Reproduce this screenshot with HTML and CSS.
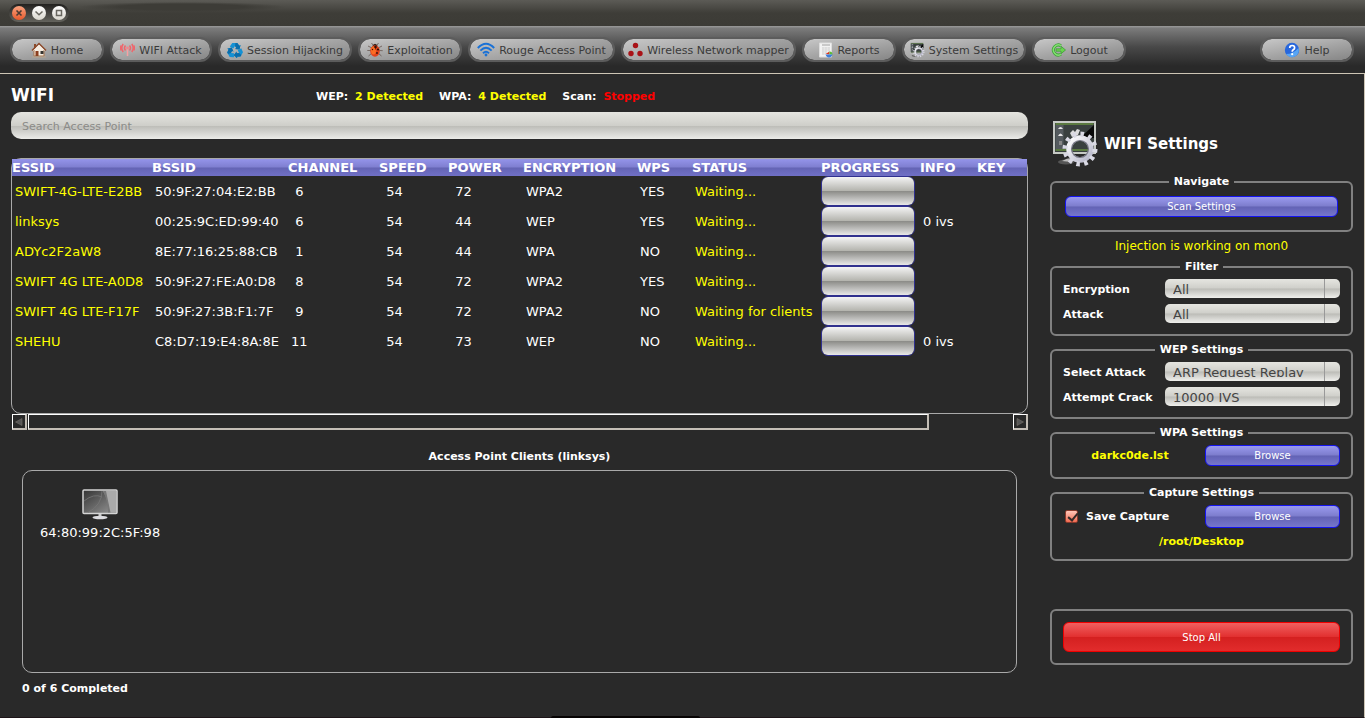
FILE: index.html
```html
<!DOCTYPE html>
<html lang="en">
<head>
<meta charset="utf-8">
<title>WIFI</title>
<link rel="stylesheet" href="styles.css">
</head>
<body>
<header class="titlebar">
  <div class="window-controls">
    <button class="wc wc-close" aria-label="Close"><svg viewBox="0 0 14 14"><path d="M4.5 4.5l5 5M9.5 4.5l-5 5" stroke="#4a3a32" stroke-width="1.6"/></svg></button>
    <button class="wc" aria-label="Minimize"><svg viewBox="0 0 14 14"><path d="M3.5 5.5L7 8.8l3.500-3.300" fill="none" stroke="#68665f" stroke-width="1.500"/></svg></button>
    <button class="wc" aria-label="Maximize"><svg viewBox="0 0 14 14"><rect x="4.500" y="4.500" width="5" height="5" fill="none" stroke="#68665f" stroke-width="1.500"/></svg></button>
  </div>
</header>

<nav class="toolbar">
  <button class="tool"><svg width="16" height="16" viewBox="0 0 16 16"><path d="M3 8v6h10V8L8 3z" fill="#f6eee2" stroke="#a9744d"/><rect x="3" y="2" width="2" height="5" fill="#8b4a2a"/><path d="M1 8.500L8 1.500l7 7" fill="none" stroke="#8e4c2c" stroke-width="1.500"/><path d="M2.500 8.500L8 3l5.500 5.500" fill="none" stroke="#fff" stroke-width=".8"/><rect x="4.500" y="9" width="3" height="5" fill="#8a3f1f"/><rect x="9.500" y="9" width="3" height="3" fill="#35332f"/><path d="M1 15h14" stroke="#b9a58c"/></svg><span class="tool-label">Home</span></button>
  <button class="tool tool-attack"><svg width="15" height="16" viewBox="0 0 15 16"><g fill="none" stroke="#f0646a" stroke-width="1.500"><path d="M3.200 2A7 7 0 0 0 3.200 10M11.800 2a7 7 0 0 1 0 8M5.500 3.500a4 4 0 0 0 0 5M9.500 3.500a4 4 0 0 1 0 5"/><path d="M7.500 6v8" stroke="#f8a0a2"/><path d="M1.200 3.500a6 6 0 0 0 0 5M13.800 3.500a6 6 0 0 1 0 5"/></g><circle cx="7.500" cy="6" r="1.400" fill="#f4858a"/></svg><span class="tool-label">WIFI Attack</span></button>
  <button class="tool tool-session"><svg width="16" height="16" viewBox="0 0 16 16"><defs><g id="recycle-arm"><path d="M5.300 1h5l2 2.800 1.200-.8-1 4.500-4.500-.6 1.300-.9-1.300-2-1.700 2.500-3.500-2z" fill="#1591d4"/><path d="M8.500 1h1.800l2 2.800 1.200-.8-1 4.500-4.500-.6 1.300-.9-1.300-2z" fill="#0b6dab"/></g></defs><use href="#recycle-arm"/><use href="#recycle-arm" transform="rotate(120 8 8.700)"/><use href="#recycle-arm" transform="rotate(240 8 8.700)"/></svg><span class="tool-label">Session Hijacking</span></button>
  <button class="tool tool-exploit"><svg width="16" height="16" viewBox="0 0 16 16"><g stroke="#5d4a43" stroke-width=".7" fill="none"><path d="M5 6L1 4M4 8.500L.3 8.500M5 11l-3.500 3M11 6l4-2M12 8.500l3.700.2M11 11l3.500 3M6 3L4.500 1M10 3l1.500-2"/></g><path d="M5 4.500Q8-1 11 4.500z" fill="#30201c"/><ellipse cx="8" cy="9" rx="4.800" ry="5.800" fill="#e2411a"/><ellipse cx="6.500" cy="8.500" rx="2.500" ry="4" fill="#fb6c22"/><path d="M8.500 3.500v4" stroke="#611408" stroke-width=".8"/><g fill="#351008"><circle cx="8.500" cy="5" r="1.300"/><circle cx="11" cy="7.500" r="1.100"/><circle cx="10" cy="11" r=".9"/><circle cx="5.500" cy="7.500" r=".7"/></g></svg><span class="tool-label">Exploitation</span></button>
  <button class="tool tool-rouge"><svg width="18" height="16" viewBox="0 0 18 16"><g fill="none" stroke="#1971d6" stroke-width="1.900"><path d="M.8 6Q9-2.500 17.200 6M3.400 8.600Q9 3 14.600 8.600M6 11.200q3-2.800 6 0"/></g><circle cx="9" cy="13" r="1.400" fill="#1971d6"/></svg><span class="tool-label">Rouge Access Point</span></button>
  <button class="tool tool-mapper"><svg width="15" height="16" viewBox="0 0 15 16"><g fill="#a91217"><circle cx="7.500" cy="3.500" r="2.700"/><circle cx="3" cy="11.500" r="2.700"/><circle cx="12" cy="11.500" r="2.700"/></g></svg><span class="tool-label">Wireless Network mapper</span></button>
  <button class="tool"><svg width="15" height="16" viewBox="0 0 15 16"><path d="M1.500 1h12v14h-12z" fill="#f2f2f2" stroke="#ddd"/><path d="M4 3h8" stroke="#bbb" stroke-width="1.500"/><path d="M4 6h8M4 8h8M4 10h5M4 12h4M5 5v8M8 5v6M11 5v5" stroke="#d0d0d0" stroke-width=".7"/><path d="M7.500 12l4-2.500v3z" fill="#d93622"/><path d="M11.500 9.500q3 0 3 3h-3z" fill="#5ebc34"/><path d="M7.500 12.500h7q-1 3-3.500 3t-3.500-3z" fill="#3b7ddb"/></svg><span class="tool-label">Reports</span></button>
  <button class="tool tool-system"><svg width="15" height="16" viewBox="0 0 46 46"><use href="#display-gear"/></svg><span class="tool-label">System Settings</span></button>
  <button class="tool"><svg width="16" height="16" viewBox="0 0 16 16"><path d="M11 3.700A5 5 0 1 0 11 12.300" fill="none" stroke="#3c9f36" stroke-width="3"/><path d="M11 3.700A5 5 0 1 0 11 12.300" fill="none" stroke="#82e070" stroke-width="1.500"/><path d="M6 6.800h5V4.300L15.500 8 11 11.700V9.200H6z" fill="#69d34e" stroke="#3c9f36" stroke-width=".8"/></svg><span class="tool-label">Logout</span></button>
  <button class="tool tool-help"><svg width="16" height="16" viewBox="0 0 16 16"><circle cx="8" cy="8" r="7.200" fill="#2867dc"/><path d="M2 12Q9 12 14.500 6A7 7 0 0 1 2 12z" fill="#58a5f4"/><path d="M5.700 6q0-2.500 2.500-2.500T10.600 6Q10.600 7 9 8q-.8.600-.8 1.700" fill="none" stroke="#fff" stroke-width="1.700"/><circle cx="8.200" cy="12.200" r="1.100" fill="#fff"/></svg><span class="tool-label">Help</span></button>
</nav>

<div class="workspace">
  <main class="scanner">
    <div class="scan-head">
      <h1>WIFI</h1>
      <dl class="stats">
        <div><dt>WEP:</dt><dd>2 Detected</dd></div>
        <div><dt>WPA:</dt><dd>4 Detected</dd></div>
        <div><dt>Scan:</dt><dd class="stopped">Stopped</dd></div>
      </dl>
    </div>
    <input class="search" type="text" placeholder="Search Access Point" aria-label="Search Access Point">

    <div class="table-frame">
      <table class="ap-table">
        <colgroup><col class="c-essid"><col class="c-bssid"><col class="c-channel"><col class="c-speed"><col class="c-power"><col class="c-enc"><col class="c-wps"><col class="c-status"><col class="c-progress"><col class="c-info"><col></colgroup>
        <thead><tr><th>ESSID</th><th>BSSID</th><th>CHANNEL</th><th>SPEED</th><th>POWER</th><th>ENCRYPTION</th><th>WPS</th><th>STATUS</th><th>PROGRESS</th><th>INFO</th><th>KEY</th></tr></thead>
        <tbody>
          <tr><td class="hl">SWIFT-4G-LTE-E2BB</td><td>50:9F:27:04:E2:BB</td><td>&nbsp;6</td><td>&nbsp;54</td><td>&nbsp;72</td><td>WPA2</td><td>YES</td><td class="hl">Waiting...</td><td class="bar-cell"><progress value="0" max="100" aria-label="Progress"></progress></td><td></td><td></td></tr>
          <tr><td class="hl">linksys</td><td>00:25:9C:ED:99:40</td><td>&nbsp;6</td><td>&nbsp;54</td><td>&nbsp;44</td><td>WEP</td><td>YES</td><td class="hl">Waiting...</td><td class="bar-cell"><progress value="0" max="100" aria-label="Progress"></progress></td><td>0 ivs</td><td></td></tr>
          <tr><td class="hl">ADYc2F2aW8</td><td>8E:77:16:25:88:CB</td><td>&nbsp;1</td><td>&nbsp;54</td><td>&nbsp;44</td><td>WPA</td><td>NO</td><td class="hl">Waiting...</td><td class="bar-cell"><progress value="0" max="100" aria-label="Progress"></progress></td><td></td><td></td></tr>
          <tr><td class="hl">SWIFT 4G LTE-A0D8</td><td>50:9F:27:FE:A0:D8</td><td>&nbsp;8</td><td>&nbsp;54</td><td>&nbsp;72</td><td>WPA2</td><td>YES</td><td class="hl">Waiting...</td><td class="bar-cell"><progress value="0" max="100" aria-label="Progress"></progress></td><td></td><td></td></tr>
          <tr><td class="hl">SWIFT 4G LTE-F17F</td><td>50:9F:27:3B:F1:7F</td><td>&nbsp;9</td><td>&nbsp;54</td><td>&nbsp;72</td><td>WPA2</td><td>NO</td><td class="hl">Waiting for clients</td><td class="bar-cell"><progress value="0" max="100" aria-label="Progress"></progress></td><td></td><td></td></tr>
          <tr><td class="hl">SHEHU</td><td>C8:D7:19:E4:8A:8E</td><td>11</td><td>&nbsp;54</td><td>&nbsp;73</td><td>WEP</td><td>NO</td><td class="hl">Waiting...</td><td class="bar-cell"><progress value="0" max="100" aria-label="Progress"></progress></td><td>0 ivs</td><td></td></tr>
        </tbody>
      </table>
    </div>
    <div class="hscroll">
      <button class="hs-part hs-arrow" aria-label="Scroll left"><svg width="8" height="8" viewBox="0 0 8 8"><path d="M7 .5v7L.5 4z" fill="#555" stroke="#777069" stroke-width=".6"/></svg></button>
      <div class="hs-track"><div class="hs-part hs-thumb"></div></div>
      <button class="hs-part hs-arrow" aria-label="Scroll right"><svg width="8" height="8" viewBox="0 0 8 8"><path d="M1 .5v7L7.500 4z" fill="#555" stroke="#777069" stroke-width=".6"/></svg></button>
    </div>

    <h2 class="clients-title">Access Point Clients (linksys)</h2>
    <section class="clients">
      <figure class="client">
        <svg width="36" height="31" viewBox="0 0 36 31">
          <defs><linearGradient id="screen" x1="0" y1="0" x2="1" y2="1"><stop offset="0" stop-color="#333"/><stop offset="1" stop-color="#999"/></linearGradient></defs>
          <rect x="1" y="1" width="34" height="23.500" rx="1" fill="url(#screen)" stroke="#d4d4d4" stroke-width="1.500"/>
          <path d="M21 2h13v21.500H27Q27 12 21 2z" fill="#aaa"/><path d="M21 2h3l4.500 21.500H26Q26 12 21 2z" fill="#777"/>
          <path d="M20 2Q20 16 6 23.500M2 12Q12 4 20 8" fill="none" stroke="#777" stroke-width=".8"/>
          <path d="M16.500 25h3v2.500h-3z" fill="#ccc"/><ellipse cx="18" cy="28.500" rx="7.500" ry="1.800" fill="#dcdce0"/>
        </svg>
        <figcaption>64:80:99:2C:5F:98</figcaption>
      </figure>
    </section>
    <p class="completed">0 of 6 Completed</p>
  </main>

  <aside class="settings">
    <div class="settings-head">
      <svg width="46" height="46" viewBox="0 0 46 46">
        <defs>
          <linearGradient id="steel" x1="0" y1="0" x2="1" y2="1"><stop offset="0" stop-color="#fff"/><stop offset="1" stop-color="#b4b4c8"/></linearGradient>
          <g id="display-gear">
            <ellipse cx="13" cy="41" rx="8" ry="2.500" fill="#555"/><path d="M9 40q5-3 9-3v4z" fill="#bbb"/>
            <rect x="1" y="1" width="41" height="31" fill="#39403f" stroke="#c6c9c5" stroke-width="2"/>
            <path d="M2.500 3h38M2.500 29h38" stroke="#7cb342"/>
            <path d="M2.500 4h8v24h-8z" fill="#555b5f"/>
            <path d="M41 4v13L26 18z" fill="#090909"/>
            <path d="M5 8q2.500-4 5 0zM5 15q2.500-5 5 0z" fill="#e8e8e8"/><path d="M6 20h3v4H6z" fill="#888"/>
            <path d="M17 12l3-3 2 2 2-3 3 1-2 5-6 2z" fill="#ddd"/>
            <circle cx="27" cy="28" r="11" fill="none" stroke="url(#steel)" stroke-width="5.500"/>
            <circle cx="27" cy="28" r="15" fill="none" stroke="#d9d9e4" stroke-width="5" stroke-dasharray="3.500 4.354"/>
            <circle cx="27" cy="28" r="8.500" fill="none" stroke="#787887" stroke-width="1.200"/>
          </g>
        </defs>
        <use href="#display-gear"/>
      </svg>
      <h2>WIFI Settings</h2>
    </div>

    <fieldset class="group group-nav">
      <legend>Navigate</legend>
      <button class="btn">Scan Settings</button>
    </fieldset>
    <p class="injection">Injection is working on mon0</p>

    <fieldset class="group">
      <legend>Filter</legend>
      <div class="fields">
        <label for="enc">Encryption</label><select id="enc"><option>All</option></select>
        <label for="atk">Attack</label><select id="atk"><option>All</option></select>
      </div>
    </fieldset>

    <fieldset class="group">
      <legend>WEP Settings</legend>
      <div class="fields">
        <label for="sel">Select Attack</label><select id="sel"><option>ARP Request Replay</option></select>
        <label for="crack">Attempt Crack</label><select id="crack"><option>10000 IVS</option></select>
      </div>
    </fieldset>

    <fieldset class="group">
      <legend>WPA Settings</legend>
      <div class="split">
        <span class="path">darkc0de.lst</span>
        <button class="btn">Browse</button>
      </div>
    </fieldset>

    <fieldset class="group">
      <legend>Capture Settings</legend>
      <div class="split">
        <label class="check"><input type="checkbox" checked><span>Save Capture</span></label>
        <button class="btn btn-tall">Browse</button>
      </div>
      <p class="path path-line">/root/Desktop</p>
    </fieldset>

    <div class="group group-stop">
      <button class="btn btn-stop">Stop All</button>
    </div>
  </aside>
</div>
</body>
</html>
```

FILE: styles.css
```css
* {
  box-sizing: border-box;
}

body {
  margin: 0;
  min-height: 100vh;
  display: flex;
  flex-direction: column;
  position: relative;
  background: #292929;
  color: #fff;
  font-family: "DejaVu Sans", Verdana, sans-serif;
  font-size: 11px;
}

body::after {
  content: "";
  position: absolute;
  bottom: 0;
  left: 551px;
  width: 149px;
  height: 2px;
  border-radius: 2px 2px 0 0;
  background: #060303;
}

h1, h2, p, dl, dd, figure {
  margin: 0;
}

button, input, select {
  font-family: inherit;
  margin: 0;
}

/* Title bar */
.titlebar {
  height: 26px;
  padding: 4px 0 0 9px;
  background:
    radial-gradient(closest-side, #3d3c37 60%, transparent) 78px 2px / 208px 10px no-repeat,
    linear-gradient(#5c5b56, #3e3d38 50%, #3c3b36);
}

.window-controls {
  display: flex;
  gap: 6px;
  width: 60px;
  height: 18px;
  padding: 2px 3px;
  border-radius: 9px;
  background: linear-gradient(#22211f, #64635d);
}

.wc {
  width: 14px;
  height: 14px;
  flex: none;
  padding: 0;
  border: 0;
  border-radius: 50%;
  background: linear-gradient(#fff, #d8d5cc);
}

.wc svg {
  display: block;
}

.wc-close {
  background: linear-gradient(#f9a27e, #e8592c);
}

/* Toolbar */
.toolbar {
  display: flex;
  align-items: center;
  gap: 6px;
  height: 48px;
  padding: 0 11px 0 10px;
  border-bottom: 1px solid #cdc5b5;
  background: linear-gradient(#9b9b9b, #7b7b7b 5%, #484848 45%, #292929 85%);
}

.tool {
  display: flex;
  align-items: center;
  justify-content: center;
  gap: 4px;
  min-width: 94px;
  height: 25px;
  padding: 0 5px;
  border: 2px solid #5c5c5c;
  border-radius: 12px;
  background: linear-gradient(170deg, #c8c8c8, #a5a5a5 50%, #858585) padding-box;
  color: #3a3a3a;
  font-size: 11px;
}

.tool svg {
  flex: none;
}

.tool-label {
  height: 12px;
  line-height: 14px;
  overflow: hidden;
  white-space: nowrap;
}

.tool-attack { min-width: 102px; }
.tool-session { min-width: 134px; }
.tool-exploit { min-width: 104px; }
.tool-rouge { min-width: 147px; }
.tool-mapper { min-width: 175px; }
.tool-system { min-width: 124px; }

.tool-help {
  margin-left: auto;
}

/* Page columns */
.workspace {
  flex: 1;
  display: grid;
  grid-template-columns: minmax(0, 1fr) 303px;
  gap: 22px;
  padding: 0 11px;
  border-right: 1px solid #cdc5b5;
  border-bottom: 1px solid #1d1418;
}

.scanner {
  display: flex;
  flex-direction: column;
}

.scan-head {
  display: flex;
  align-items: center;
  height: 38px;
  padding-top: 4px;
}

.scan-head h1 {
  flex: 0 0 305px;
  font-size: 17px;
  line-height: 20px;
}

.stats {
  display: flex;
  gap: 16px;
  padding-top: 2px;
  font-weight: bold;
}

.stats div {
  display: flex;
  gap: 7px;
}

.stats dd {
  color: #ff0;
}

.stats .stopped {
  color: #f00;
}

.search {
  width: 100%;
  height: 27px;
  padding: 1px 11px 0;
  border: 0;
  border-radius: 10px;
  background: linear-gradient(#e5e5e0, #cfcfca 50%, #bdbdb8 52%, #ebebe8);
  color: #333;
  font-size: 11px;
}

.search::placeholder {
  color: #8b8b88;
}

/* Access point table */
.table-frame {
  height: 256px;
  margin-top: 19px;
  border: 1px solid #a9a9a9;
  border-radius: 10px;
}

.ap-table {
  width: 100%;
  table-layout: fixed;
  border-collapse: collapse;
  font-size: 13px;
  white-space: nowrap;
}

.ap-table thead tr {
  height: 17px;
  background: linear-gradient(#9494ea, #7f7fd0 48%, #6464b4 52%, #7070c6);
}

.ap-table th {
  padding: 0;
  line-height: 17px;
  text-align: left;
}

.ap-table td {
  height: 30px;
  padding: 0 0 0 3px;
}

.ap-table .hl {
  color: #ff0;
}

.ap-table .bar-cell {
  padding: 0;
}

.c-essid { width: 140px; }
.c-bssid { width: 136px; }
.c-channel { width: 91px; }
.c-speed { width: 69px; }
.c-power { width: 75px; }
.c-enc { width: 114px; }
.c-wps { width: 55px; }
.c-status { width: 129px; }
.c-progress { width: 99px; }
.c-info { width: 57px; }

progress {
  appearance: none;
  display: block;
  width: 94px;
  height: 30px;
  border: 1px solid #30308e;
  border-radius: 7px;
  overflow: hidden;
}

progress::-webkit-progress-bar {
  background: linear-gradient(#f4f4f4, #b4b4ae 49%, #8c8c88 51%, #e8e8e8);
}

progress::-webkit-progress-value {
  background: #6464b4;
}

/* Horizontal scroll strip */
.hscroll {
  display: flex;
  height: 16px;
  padding-left: 1px;
}

.hs-part {
  border: 1px solid #fff;
  border-right: 2px solid #c3bdb5;
  border-bottom: 2px solid #c3bdb5;
  background: none;
}

.hs-arrow {
  flex: 0 0 15px;
  display: flex;
  align-items: center;
  justify-content: center;
  padding: 0;
}

.hs-track {
  flex: 1;
  display: flex;
  padding-left: 1px;
}

.hs-thumb {
  width: 91.500%;
}

/* Clients */
.clients-title {
  margin: 20px 0 6px;
  font-size: 11px;
  line-height: 14px;
  text-align: center;
}

.clients {
  flex: 1;
  margin: 0 11px;
  padding: 18px 17px;
  border: 1px solid #a9a9a9;
  border-radius: 10px;
}

.client {
  display: inline-flex;
  flex-direction: column;
  align-items: center;
  gap: 5px;
  font-size: 13px;
}

.completed {
  padding: 8px 11px 21px;
  font-weight: bold;
  line-height: 15px;
}

/* Settings column */
.settings-head {
  display: flex;
  align-items: center;
  gap: 5px;
  padding: 47px 3px 8px;
}

.settings-head h2 {
  font-size: 15px;
}

.group {
  min-width: 0;
  margin: 0 0 7px;
  padding: 5px 11px 11px;
  border: 2px solid #808080;
  border-radius: 6px;
}

.group legend {
  margin: 0 auto;
  padding: 0 5px;
  font-weight: bold;
  line-height: 14px;
}

.group-nav {
  margin: 0;
  padding: 7px 13px 13px;
}

.group-stop {
  margin: 48px 0 0;
  padding: 11px;
}

.btn {
  display: block;
  width: 100%;
  height: 21px;
  padding: 0;
  border: 1px solid #1414f0;
  border-radius: 6px;
  background: linear-gradient(#9a9aee, #7c7ccc 49%, #6262b4 51%, #7676cc);
  color: #fff;
  font-size: 10px;
}

.btn-tall {
  height: 23px;
}

.btn-stop {
  height: 30px;
  border-color: #f00000;
  background: linear-gradient(#f06060, #e23030 49%, #d42020 51%, #e22c2c);
}

.injection {
  color: #ff0;
  font-size: 12px;
  line-height: 28px;
  text-align: center;
}

.fields {
  display: grid;
  grid-template-columns: 102px minmax(0, 1fr);
  align-items: center;
  row-gap: 6px;
  font-weight: bold;
}

.fields label {
  padding-top: 2px;
}

select {
  appearance: none;
  width: 100%;
  height: 19px;
  padding: 3px 16px 4px 8px;
  border: 0;
  border-radius: 5px;
  background:
    linear-gradient(#999, #999) right 15px top / 1px 100% no-repeat,
    linear-gradient(#e5e5e0, #cfcfca 49%, #bbbbb6 51%, #efefec);
  color: #444;
  font-size: 13px;
}

.split {
  display: grid;
  grid-template-columns: minmax(0, 1fr) 135px;
  gap: 8px;
  align-items: center;
}

.path {
  color: #ff0;
  font-weight: bold;
  text-align: center;
}

.path-line {
  padding: 7px 0 0;
  line-height: 13px;
}

.check {
  display: flex;
  align-items: center;
  gap: 8px;
  padding-left: 2px;
  font-weight: bold;
}

.check input {
  appearance: none;
  width: 13px;
  height: 13px;
  border-radius: 2px;
  border: 1px solid #8a3a2c;
  background: linear-gradient(#ffc6b8, #f26a50);
  position: relative;
}

.check input:checked::after {
  content: "";
  position: absolute;
  left: 4px;
  top: 0;
  width: 4px;
  height: 8px;
  border: solid #332a28;
  border-width: 0 2px 2px 0;
  transform: rotate(40deg);
}
```
